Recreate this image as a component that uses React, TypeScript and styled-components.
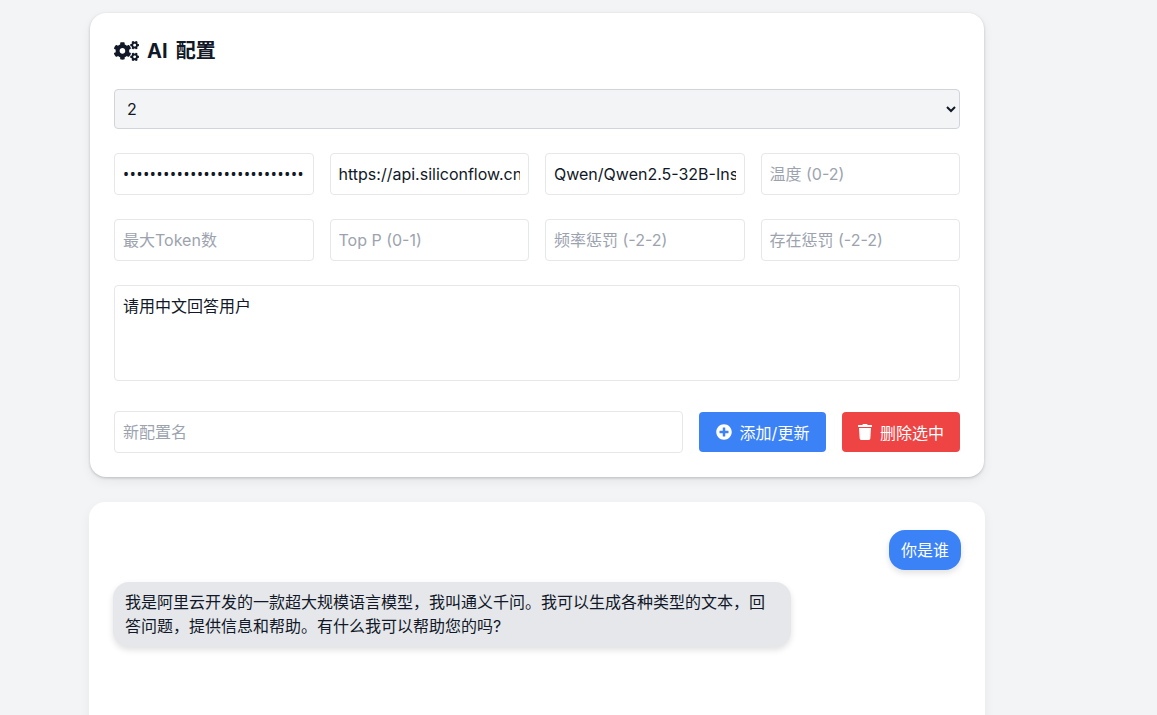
import React from "react";
import styled, { createGlobalStyle } from "styled-components";
import { FaCogs, FaPlusCircle, FaTrash } from "react-icons/fa";

const FONT = `Inter, "Noto Sans CJK SC", sans-serif`;

const ANSWER =
  "我是阿里云开发的一款超大规模语言模型\uFF0C我叫通义千问。我可以生成各种类型的文本\uFF0C回答问题\uFF0C提供信息和帮助。有什么我可以帮助您的吗?";

const Global = createGlobalStyle`
  html, body { margin: 0; padding: 0; height: 100%; overflow: hidden; background: #f3f4f6; }
  body { font-family: ${FONT}; color: #111827; }
  * { box-sizing: border-box; }
`;

const Page = styled.div`
  width: 896px;
  margin-left: 89px;
  padding-top: 13px;
  display: flex;
  flex-direction: column;
  gap: 25px;
`;

const ConfigCard = styled.section`
  margin: 0 1px;
  background: #fff;
  border-radius: 16px;
  padding: 24px;
  box-shadow: 0 1px 3px rgba(0, 0, 0, 0.2), 0 4px 12px rgba(0, 0, 0, 0.06);
  display: flex;
  flex-direction: column;
`;

const Title = styled.h2`
  margin: 0 0 24px;
  height: 28px;
  display: flex;
  align-items: center;
  gap: 8px;
  font-size: 20px;
  line-height: 28px;
  font-weight: 700;
  word-spacing: 3.5px;
  color: #111827;
  svg { width: 25px; height: 20px; }
`;

const ProfileSelect = styled.select`
  width: 100%;
  height: 40px;
  padding: 0 8px;
  font: 16px ${FONT};
  color: #111827;
  background: #f3f4f6;
  border: 1px solid #d1d5db;
  border-radius: 4px;
  margin-bottom: 24px;
`;

const Grid = styled.div`
  display: grid;
  grid-template-columns: repeat(4, 1fr);
  gap: 24px 16px;
  margin-bottom: 24px;
`;

const Field = styled.input`
  width: 100%;
  min-width: 0;
  height: 42px;
  padding: 0 8px;
  font: 16px ${FONT};
  color: #111827;
  background: #fff;
  border: 1px solid #e5e7eb;
  border-radius: 4px;
  outline: none;
  &::placeholder { color: #9ca3af; opacity: 1; }
`;

const SecretField = styled(Field)`
  font-family: "Noto Sans", sans-serif;
  letter-spacing: 0.7px;
`;

const Prompt = styled.textarea`
  display: block;
  width: 100%;
  height: 96px;
  padding: 8px;
  font: 16px/24px ${FONT};
  color: #111827;
  border: 1px solid #e5e7eb;
  border-radius: 4px;
  outline: none;
  resize: none;
  margin-bottom: 30px;
`;

const Actions = styled.div`
  display: flex;
  align-items: center;
  gap: 16px;
`;

const NameField = styled(Field)`
  flex: 1;
`;

const ActionButton = styled.button<{ $tone: string; $width: number }>`
  width: ${(p) => p.$width}px;
  height: 40px;
  display: inline-flex;
  align-items: center;
  justify-content: center;
  gap: 8px;
  flex: none;
  padding: 0;
  border: 0;
  border-radius: 4px;
  background: ${(p) => p.$tone};
  color: #fff;
  font: 16px ${FONT};
`;

const PlusIcon = styled(FaPlusCircle)`
  width: 16px;
  height: 16px;
`;

const TrashIcon = styled(FaTrash)`
  width: 14px;
  height: 16px;
`;

const ChatCard = styled.section`
  height: 500px;
  background: #fff;
  border-radius: 16px;
  padding: 28px 24px 24px;
  box-shadow: 0 4px 12px rgba(0, 0, 0, 0.05);
  display: flex;
  flex-direction: column;
  gap: 12px;
`;

const Bubble = styled.div<{ $mine?: boolean }>`
  align-self: ${(p) => (p.$mine ? "flex-end" : "flex-start")};
  max-width: 80%;
  padding: ${(p) => (p.$mine ? "8px 12px" : "8px 12px 9px")};
  font-size: 16px;
  line-height: 24px;
  border-radius: 16px;
  background: ${(p) => (p.$mine ? "#3b82f6" : "#e5e7eb")};
  color: ${(p) => (p.$mine ? "#fff" : "#111827")};
  box-shadow: 0 3px 6px rgba(0, 0, 0, 0.12);
`;

export default function App() {
  return (
    <>
      <Global />
      <Page>
        <ConfigCard>
          <Title>
            <FaCogs />
            AI 配置
          </Title>
          <ProfileSelect defaultValue="2">
            <option value="2">2</option>
          </ProfileSelect>
          <Grid>
            <SecretField type="password" defaultValue="sk-abcdefghijklmnopqrstuvwxyz0123456789" />
            <Field defaultValue="https://api.siliconflow.cn/v1/chat/completions" />
            <Field defaultValue="Qwen/Qwen2.5-32B-Instruct" />
            <Field placeholder="温度 (0-2)" />
            <Field placeholder="最大Token数" />
            <Field placeholder="Top P (0-1)" />
            <Field placeholder="频率惩罚 (-2-2)" />
            <Field placeholder="存在惩罚 (-2-2)" />
          </Grid>
          <Prompt defaultValue="请用中文回答用户" />
          <Actions>
            <NameField placeholder="新配置名" />
            <ActionButton $tone="#3b82f6" $width={127}>
              <PlusIcon />
              添加/更新
            </ActionButton>
            <ActionButton $tone="#ef4444" $width={118}>
              <TrashIcon />
              删除选中
            </ActionButton>
          </Actions>
        </ConfigCard>
        <ChatCard>
          <Bubble $mine>你是谁</Bubble>
          <Bubble>{ANSWER}</Bubble>
        </ChatCard>
      </Page>
    </>
  );
}
